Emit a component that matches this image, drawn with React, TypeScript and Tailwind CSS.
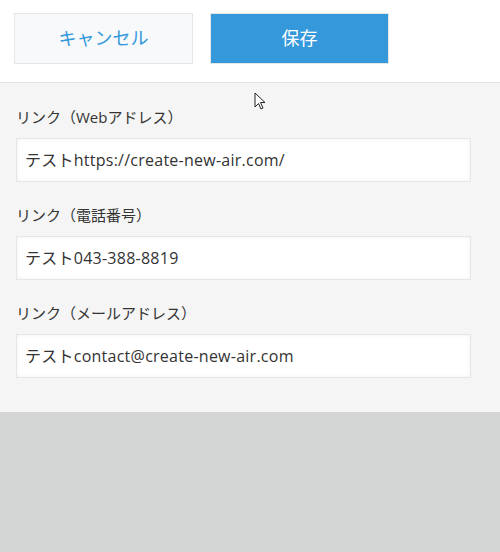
const fields = [
	{ label: "リンク（Webアドレス）", value: "テストhttps://create-new-air.com/" },
	{ label: "リンク（電話番号）", value: "テスト043-388-8819" },
	{ label: "リンク（メールアドレス）", value: "テストcontact@create-new-air.com" },
];

export default function App() {
	return (
		<div
			className="relative min-h-[552px] bg-[#d4d5d5] text-[#333]"
			style={{ fontFamily: '"Open Sans", "Noto Sans CJK JP", sans-serif' }}
		>
			{/* Header buttons */}
			<header className="flex h-[83px] gap-[17px] border-b border-[#e3e3e3] bg-white px-[14px] pt-[13px]">
				<button className="h-[51px] w-[179px] border border-[#e3e7e8] bg-[#f7f9fa] text-[18px] text-[#3498db]">
					キャンセル
				</button>
				<button className="h-[51px] w-[179px] border border-[#e3e7e8] bg-[#3498db] text-[18px] text-white">
					保存
				</button>
			</header>

			{/* Form */}
			<section className="flex flex-col gap-[22px] bg-[#f5f5f5] px-4 pb-[34px] pt-[23px]">
				{fields.map((f) => (
					<div key={f.label}>
						<div className="text-[15px] leading-[22px]">{f.label}</div>
						<div className="mt-[10px] flex h-[44px] w-[455px] items-center border border-[#e3e7e8] bg-white px-2 text-[16px] tracking-[0.25px] shadow-[inset_0_0_4px_rgba(0,0,0,0.06)]">
							{f.value}
						</div>
					</div>
				))}
			</section>

			{/* Mouse cursor */}
			<svg
				className="absolute left-[254px] top-[92px]"
				width="14"
				height="20"
				viewBox="0 0 14 20"
			>
				<path
					d="M1 1 L1 15 L4.5 11.5 L7 17 L9 16 L6.5 10.5 L11 10.5 Z"
					fill="white"
					stroke="#222"
					strokeWidth="1"
					strokeLinejoin="round"
				/>
			</svg>
		</div>
	);
}
